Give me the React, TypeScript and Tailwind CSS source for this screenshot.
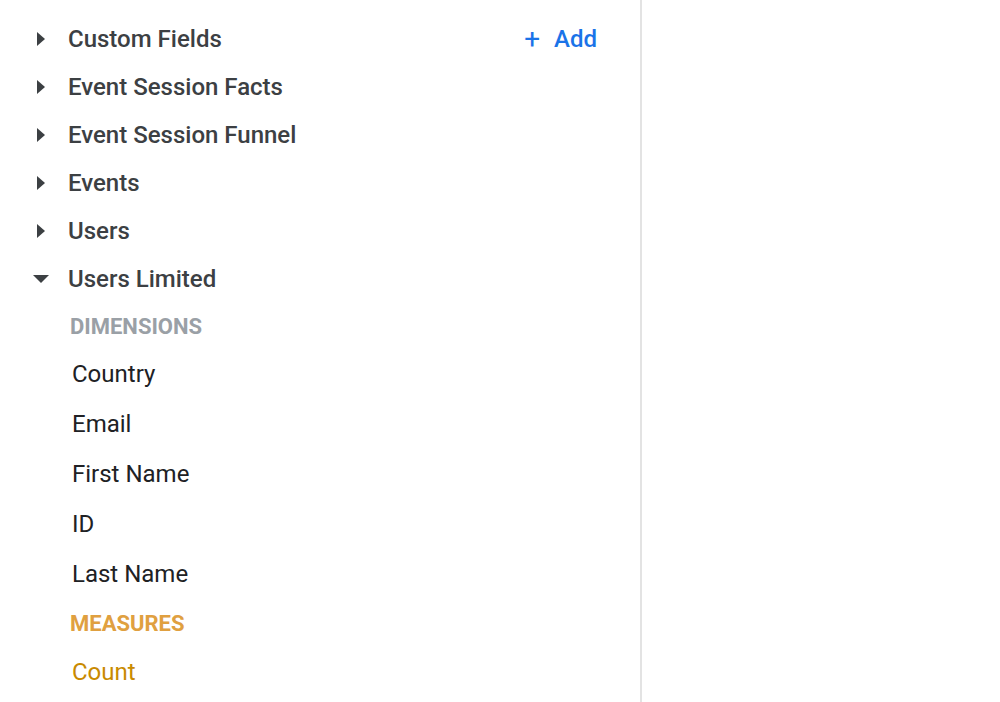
import React from 'react';

const groups = ['Custom Fields', 'Event Session Facts', 'Event Session Funnel', 'Events', 'Users'];
const dimensions = ['Country', 'Email', 'First Name', 'ID', 'Last Name'];

function Caret({ open }: { open?: boolean }) {
  return (
    <span className="w-[24px] flex items-center justify-center">
      {open ? (
        <svg width="16" height="9" viewBox="0 0 16 9">
          <path d="M0 0 L16 0 L8 8 Z" fill="#3c4043" />
        </svg>
      ) : (
        <svg width="9" height="14" viewBox="0 0 9 14">
          <path d="M0 0 L8 7 L0 14 Z" fill="#3c4043" />
        </svg>
      )}
    </span>
  );
}

export default function App() {
  return (
    <div className="h-[702px] w-[1000px] bg-white flex font-['Roboto',sans-serif]">
      <div className="w-[642px] shrink-0 border-r-2 border-[#e3e3e3] pl-[29px] pr-[43px] pt-[15px]">
        {groups.map((g, i) => (
          <div key={g} className="h-[48px] flex items-center">
            <Caret />
            <span className="ml-[15px] text-[24px] font-medium text-[#3c4043]">{g}</span>
            {i === 0 && (
              <button className="ml-auto flex items-center gap-[14px] text-[#1a73e8] text-[24px] font-medium">
                <span className="text-[28px] font-normal leading-none">+</span>
                <span>Add</span>
              </button>
            )}
          </div>
        ))}
        <div className="h-[48px] flex items-center">
          <Caret open />
          <span className="ml-[15px] text-[24px] font-medium text-[#3c4043]">Users Limited</span>
        </div>
        <div className="pl-[41px]">
          <div className="h-[46px] flex items-center text-[22px] font-bold text-[#9aa0a6] uppercase">Dimensions</div>
          {dimensions.map((d) => (
            <div key={d} className="h-[50px] flex items-center pl-[2px] text-[24px] text-[#202124]">
              {d}
            </div>
          ))}
          <div className="h-[49px] flex items-center text-[22px] font-bold text-[#e0a040] uppercase">Measures</div>
          <div className="h-[48px] flex items-center pl-[2px] text-[24px] text-[#c98a00]">Count</div>
        </div>
      </div>
      <div className="flex-1" />
    </div>
  );
}
